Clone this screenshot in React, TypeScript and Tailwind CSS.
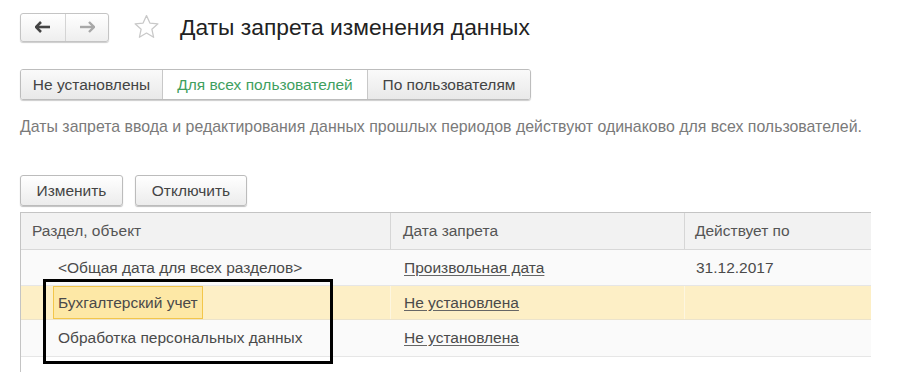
import React from "react";

const font = { fontFamily: '"Liberation Sans", Arial, sans-serif' };

function Btn({ children, className = "" }: { children: React.ReactNode; className?: string }) {
  return (
    <div
      className={
        "flex items-center justify-center rounded-[3px] border border-[#bcbcbc] bg-gradient-to-b from-white to-[#ececec] shadow-[0_1px_1px_rgba(0,0,0,0.25)] text-[15.5px] text-[#444] " +
        className
      }
    >
      {children}
    </div>
  );
}

export default function App() {
  return (
    <div className="relative w-[907px] h-[385px] bg-white overflow-hidden text-[#4a4a4a]" style={font}>
      {/* Header */}
      <div className="flex items-center h-[30px] mt-[12px] ml-[20px]">
        <div className="flex h-[29px] w-[89px] rounded-[3px] border border-[#c4c4c4] bg-gradient-to-b from-white to-[#eeeeee] shadow-[0_1px_1px_rgba(0,0,0,0.2)]">
          <div className="flex w-[45px] items-center justify-center border-r border-[#d4d4d4]">
            <svg width="16" height="12" viewBox="0 0 16 12">
              <path d="M6 1 L1 6 L6 11" stroke="#444" strokeWidth="2.6" fill="none" />
              <path d="M1.5 6 H15" stroke="#444" strokeWidth="2.6" />
            </svg>
          </div>
          <div className="flex flex-1 items-center justify-center">
            <svg width="16" height="12" viewBox="0 0 16 12">
              <path d="M10 1 L15 6 L10 11" stroke="#a8a8a8" strokeWidth="2.4" fill="none" />
              <path d="M1 6 H14.5" stroke="#a8a8a8" strokeWidth="2.4" />
            </svg>
          </div>
        </div>
        <svg className="ml-[23px]" width="29" height="28" viewBox="0 0 24 24">
          <path
            d="M12 2.2 L14.9 8.6 L21.8 9.3 L16.6 13.9 L18.1 20.8 L12 17.2 L5.9 20.8 L7.4 13.9 L2.2 9.3 L9.1 8.6 Z"
            fill="none"
            stroke="#c9c9c9"
            strokeWidth="1.1"
            strokeLinejoin="round"
          />
        </svg>
        <div className="ml-[19px] text-[22.8px] text-[#222] leading-none">Даты запрета изменения данных</div>
      </div>

      {/* Tabs */}
      <div className="flex mt-[27px] ml-[20px] h-[31px] w-[511px] rounded-[3px] border border-[#bdbdbd] shadow-[0_1px_1px_rgba(0,0,0,0.2)] text-[15.5px] overflow-hidden">
        <div className="flex w-[142px] items-center justify-center bg-gradient-to-b from-[#fafafa] to-[#e9e9e9] text-[#444] border-r border-[#c8c8c8]">
          Не установлены
        </div>
        <div className="flex w-[205px] items-center justify-center bg-white text-[#3f9f5f] border-r border-[#c8c8c8]">
          Для всех пользователей
        </div>
        <div className="flex flex-1 items-center justify-center bg-gradient-to-b from-[#fafafa] to-[#e9e9e9] text-[#444]">
          По пользователям
        </div>
      </div>

      {/* Description */}
      <div className="mt-[19px] ml-[20px] text-[15.9px] text-[#7a7a7a] leading-none">
        Даты запрета ввода и редактирования данных прошлых периодов действуют одинаково для всех пользователей.
      </div>

      {/* Buttons */}
      <div className="flex gap-[12px] mt-[40px] ml-[20px]">
        <Btn className="w-[103px] h-[31px]">Изменить</Btn>
        <Btn className="w-[112px] h-[31px]">Отключить</Btn>
      </div>

      {/* Table */}
      <div className="mt-[6px] ml-[20px] w-[851px] h-[160px] border-l border-t border-[#c4c4c4] text-[15.5px]">
        <div className="flex h-[37px] bg-[#f2f2f2] border-b border-[#d8d8d8] text-[#555]">
          <div className="flex w-[370px] items-center pl-[11px] border-r border-[#d6d6d6]">Раздел, объект</div>
          <div className="flex w-[294px] items-center pl-[12px] border-r border-[#d6d6d6]">Дата запрета</div>
          <div className="flex flex-1 items-center pl-[10px]">Действует по</div>
        </div>
        <div className="flex h-[36px] bg-[#fafafa] border-b border-[#e6e6e6]">
          <div className="flex w-[370px] items-center pl-[37px]">&lt;Общая дата для всех разделов&gt;</div>
          <div className="flex w-[294px] items-center pl-[13px]">
            <span className="underline underline-offset-2 decoration-[#666]">Произвольная дата</span>
          </div>
          <div className="flex flex-1 items-center pl-[11px]">31.12.2017</div>
        </div>
        <div className="flex h-[34px] bg-[#fdefc6] border-b border-[#ebe3cc]">
          <div className="flex w-[370px] items-center pl-[32px] border-r border-[#fdf6e0]">
            <div className="flex h-[33px] items-center px-[4px] bg-[#fde8a6] border-[1.5px] border-[#f3c64a]">
              Бухгалтерский учет
            </div>
          </div>
          <div className="flex w-[294px] items-center pl-[13px] border-r border-[#fdf6e0]">
            <span className="underline underline-offset-2 decoration-[#666]">Не установлена</span>
          </div>
          <div className="flex-1" />
        </div>
        <div className="flex h-[37px] bg-[#fafafa] border-b border-[#e6e6e6]">
          <div className="flex w-[370px] items-center pl-[37px]">Обработка персональных данных</div>
          <div className="flex w-[294px] items-center pl-[13px]">
            <span className="underline underline-offset-2 decoration-[#666]">Не установлена</span>
          </div>
          <div className="flex-1" />
        </div>
      </div>

      {/* Annotation rectangle */}
      <div className="absolute left-[43px] top-[279px] w-[290px] h-[85px] border-[3px] border-black pointer-events-none" />
    </div>
  );
}
